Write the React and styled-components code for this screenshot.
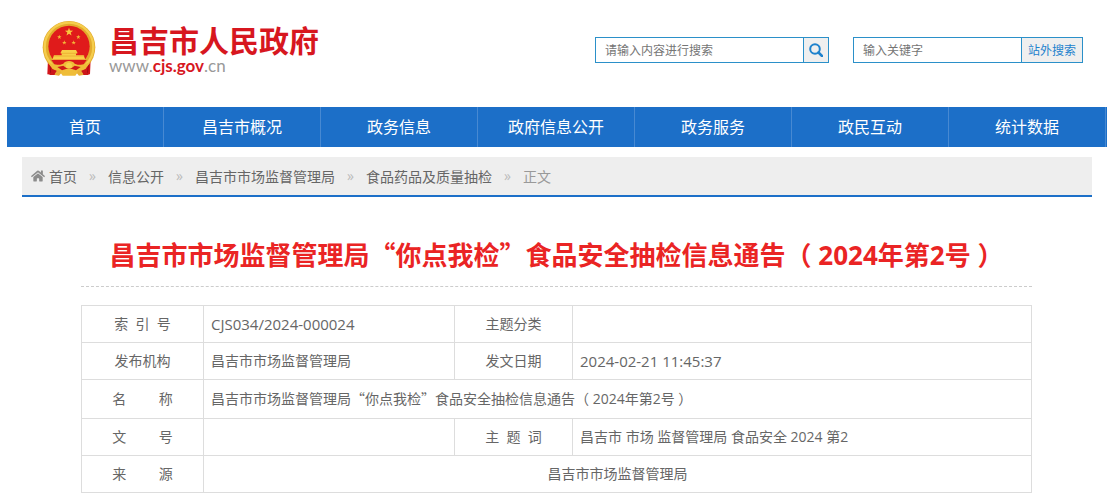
import { useState } from 'react';
import { FaHome } from 'react-icons/fa';
import styled, { createGlobalStyle } from 'styled-components';

const GlobalStyle = createGlobalStyle`
  * {
    box-sizing: border-box;
  }

  body {
    margin: 0;
    background: #fff;
    color: #666;
    font-family: 'Open Sans', 'Noto Sans CJK SC', sans-serif;
    font-size: 14px;
  }

  a {
    color: inherit;
    text-decoration: none;
  }
`;

const Page = styled.div`
  max-width: 1100px;
  margin: 0 auto;
`;

const Header = styled.header`
  display: flex;
  align-items: flex-start;
  justify-content: space-between;
  padding: 21px 24px 30px 35px;
`;

const Brand = styled.a`
  display: flex;
  gap: 13px;
`;

const BrandText = styled.div`
  display: flex;
  flex-direction: column;
`;

const BrandName = styled.span`
  color: #d7171f;
  font-family: 'Noto Sans CJK SC', sans-serif;
  font-size: 30px;
  font-weight: 700;
  line-height: 36px;
`;

const BrandUrl = styled.span`
  color: #999;
  font-family: Lato, sans-serif;
  font-size: 17px;
  line-height: 18px;

  b {
    color: #d7171f;
    font-weight: 700;
  }
`;

const Searches = styled.div`
  display: flex;
  gap: 24px;
  padding-top: 16px;
`;

const SearchForm = styled.form`
  display: flex;
  width: ${(props) => props.$width};
  height: 26px;
  border: 1px solid #2b90c9;
`;

const SearchInput = styled.input`
  flex: 1;
  min-width: 0;
  padding: 0 9px;
  border: none;
  outline: none;
  background: #fff;
  font-family: inherit;
  font-size: 12px;

  &::placeholder {
    color: #757575;
  }
`;

const SearchButton = styled.button`
  display: flex;
  align-items: center;
  justify-content: center;
  padding: 0 ${(props) => (props.$icon ? '5px' : '6px')};
  border: none;
  border-left: 1px solid #2b90c9;
  background: #efefef;
  color: #1e82cd;
  font-family: inherit;
  font-size: 12px;
`;

const Nav = styled.nav`
  display: flex;
  background: #1c6fc8;
`;

const NavLink = styled.a`
  flex: 1;
  max-width: 157px;
  border-right: 1px solid #4789d2;
  color: #fff;
  font-size: 16px;
  line-height: 40px;
  text-align: center;
`;

const Breadcrumb = styled.nav`
  display: flex;
  align-items: center;
  height: 40px;
  margin: 10px 15px 0;
  padding: 0 9px;
  border-bottom: 2px solid #1c6fc8;
  background: #eee;

  svg {
    margin-right: 4px;
    color: #8c8c8c;
  }
`;

const Crumb = styled.span`
  display: flex;
`;

const Separator = styled.span`
  width: 31px;
  color: #bbb;
  text-align: center;
`;

const Current = styled.span`
  color: #999;
`;

const Article = styled.main`
  margin: 0 75px 0 74px;
  padding: 36px 0 10px;
`;

const Title = styled.h1`
  margin: 0 0 18px;
  padding-bottom: 10px;
  border-bottom: 1px dashed #ccc;
  color: #ea2424;
  font-size: 26px;
  font-weight: 700;
  line-height: 42px;
  text-align: center;
`;

const Cjk = styled.span`
  font-family: 'Noto Sans CJK SC', sans-serif;
`;

const InfoTable = styled.table`
  width: 100%;
  height: 188px;
  border-collapse: collapse;
  table-layout: fixed;
`;

const Label = styled.th`
  padding: 0;
  border: 1px solid #ddd;
  font-weight: 400;
  line-height: 20px;
  text-align: center;
  white-space: pre;
`;

const Value = styled.td`
  padding: 0 7px;
  border: 1px solid #ddd;
  font-size: ${(props) => (props.$numeric ? '15px' : '14px')};
  line-height: 20px;
  text-align: ${(props) => (props.$center ? 'center' : 'left')};
`;

const navItems = [
  '首页',
  '昌吉市概况',
  '政务信息',
  '政府信息公开',
  '政务服务',
  '政民互动',
  '统计数据',
];

const crumbs = ['首页', '信息公开', '昌吉市市场监督管理局', '食品药品及质量抽检'];

const star = (cx, cy, r) =>
  Array.from({ length: 10 }, (_, i) => {
    const radius = i % 2 ? r * 0.4 : r;
    const angle = (Math.PI / 5) * i - Math.PI / 2;
    return `${cx + radius * Math.cos(angle)},${cy + radius * Math.sin(angle)}`;
  }).join(' ');

const Emblem = () => (
  <svg width="54" height="56" viewBox="12 14 162 168" aria-hidden="true">
    <path d="M30 128l-2 46 22 2 12-10h62l12 10 20-2 2-46z" fill="#d3141b" />
    <path d="M36 142l2 30M152 142l-4 30" stroke="#a10f13" strokeWidth="3" />
    <circle cx="93" cy="93" r="79" fill="#e3ab2c" />
    <circle cx="93" cy="92" r="73" fill="none" stroke="#f5cd4d" strokeWidth="7" />
    <circle cx="93" cy="90" r="62" fill="#e01b1b" />
    <polygon points={star(93, 47, 13)} fill="#f8c83d" />
    <polygon points={star(64, 62, 7)} fill="#f4b838" />
    <polygon points={star(121, 62, 7)} fill="#f4b838" />
    <polygon points={star(79, 79, 7)} fill="#f4b838" />
    <polygon points={star(107, 79, 7)} fill="#f4b838" />
    <path d="M72 101h42l5 10h-5v6h23l5 13H43l5-13h23v-6h-4z" fill="#f8cf48" />
    <path d="M69 111h48M47 119h92" stroke="#e9a42c" strokeWidth="2" />
    <path d="M40 131h106l-10 14H50z" fill="#d9181c" />
    <path d="M30 138q26 14 46 4 5-8 17-8t17 8q20 10 46-4l-16 24-18 2-10 14H74l-10-14-18-2z" fill="#efbd38" />
    <path d="M58 152l18-4 10 8h14l10-8 18 4-14 10-12-4H84l-12 4z" fill="#cf1a19" />
    <circle cx="93" cy="148" r="9" fill="#f7cf4c" />
    <path d="M50 164l16-2 4 8-7 8-13-2zM136 164l-16-2-4 8 7 8 13-2z" fill="#e9b035" />
    <path d="M44 158l12 6-8 12H34zM142 158l-12 6 8 12h14z" fill="#cb161a" />
  </svg>
);

const SearchIcon = () => (
  <svg width="14" height="14" viewBox="0 0 14 14" fill="none" stroke="currentColor" aria-hidden="true">
    <circle cx="6" cy="6" r="4.8" strokeWidth="2" />
    <path d="M9.5 9.5l3.5 3.5" strokeWidth="2.5" strokeLinecap="round" />
  </svg>
);

const Notice = () => (
  <>
    昌吉市市场监督管理局<Cjk>“</Cjk>你点我检<Cjk>”</Cjk>食品安全抽检信息通告（ 2024年第2号 ）
  </>
);

export default function App() {
  const [siteQuery, setSiteQuery] = useState('');
  const [webQuery, setWebQuery] = useState('');

  const handleSubmit = (e) => e.preventDefault();

  return (
    <>
      <GlobalStyle />
      <Page lang="zh-CN">
        <Header>
          <Brand href="#">
            <Emblem />
            <BrandText>
              <BrandName>昌吉市人民政府</BrandName>
              <BrandUrl>
                www.<b>cjs.gov</b>.cn
              </BrandUrl>
            </BrandText>
          </Brand>

          <Searches>
            <SearchForm $width="234px" onSubmit={handleSubmit}>
              <SearchInput
                type="text"
                aria-label="请输入内容进行搜索"
                placeholder="请输入内容进行搜索"
                value={siteQuery}
                onChange={(e) => setSiteQuery(e.target.value)}
              />
              <SearchButton type="submit" aria-label="搜索" $icon>
                <SearchIcon />
              </SearchButton>
            </SearchForm>

            <SearchForm $width="230px" onSubmit={handleSubmit}>
              <SearchInput
                type="text"
                aria-label="输入关键字"
                placeholder="输入关键字"
                value={webQuery}
                onChange={(e) => setWebQuery(e.target.value)}
              />
              <SearchButton type="submit">站外搜索</SearchButton>
            </SearchForm>
          </Searches>
        </Header>

        <Nav>
          {navItems.map((item) => (
            <NavLink key={item} href="#">
              {item}
            </NavLink>
          ))}
        </Nav>

        <Breadcrumb>
          <FaHome size={14} />
          {crumbs.map((crumb) => (
            <Crumb key={crumb}>
              <a href="#">{crumb}</a>
              <Separator>»</Separator>
            </Crumb>
          ))}
          <Current>正文</Current>
        </Breadcrumb>

        <Article>
          <Title>
            <Notice />
          </Title>

          <InfoTable>
            <colgroup>
              <col width="122" />
              <col width="251" />
              <col width="118" />
              <col />
            </colgroup>
            <tbody>
              <tr>
                <Label scope="row">{'索\u00a0\u00a0引\u00a0\u00a0号'}</Label>
                <Value $numeric>CJS034/2024-000024</Value>
                <Label scope="row">主题分类</Label>
                <Value />
              </tr>
              <tr>
                <Label scope="row">发布机构</Label>
                <Value>昌吉市市场监督管理局</Value>
                <Label scope="row">发文日期</Label>
                <Value $numeric>2024-02-21 11:45:37</Value>
              </tr>
              <tr>
                <Label scope="row">{`名${'\u00a0'.repeat(9)}称`}</Label>
                <Value colSpan={3}>
                  <Notice />
                </Value>
              </tr>
              <tr>
                <Label scope="row">{`文${'\u00a0'.repeat(9)}号`}</Label>
                <Value />
                <Label scope="row">{'主\u00a0\u00a0题\u00a0\u00a0词'}</Label>
                <Value>昌吉市 市场 监督管理局 食品安全 2024 第2</Value>
              </tr>
              <tr>
                <Label scope="row">{`来${'\u00a0'.repeat(9)}源`}</Label>
                <Value colSpan={3} $center>
                  昌吉市市场监督管理局
                </Value>
              </tr>
            </tbody>
          </InfoTable>
        </Article>
      </Page>
    </>
  );
}
